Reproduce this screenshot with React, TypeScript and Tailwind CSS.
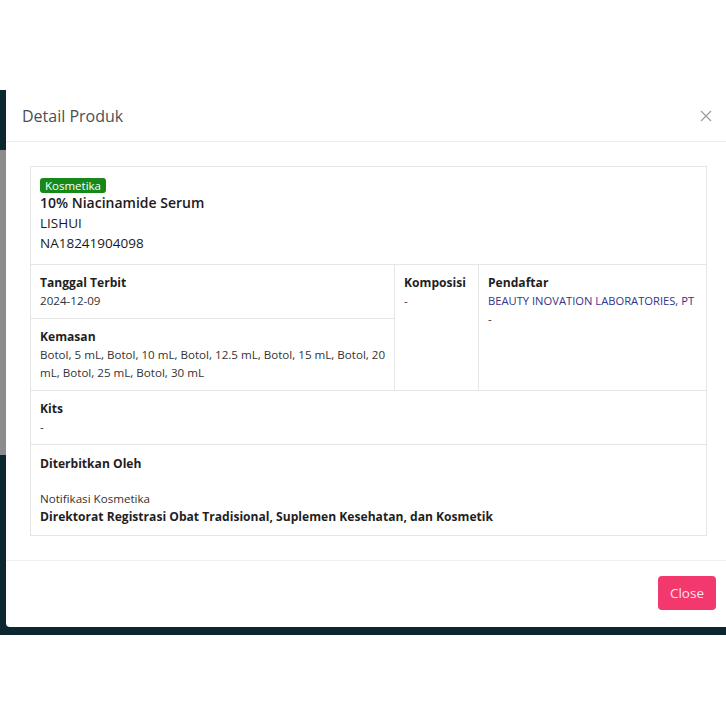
import React from 'react';

const font = { fontFamily: '"Open Sans", "Noto Sans", Arial, sans-serif' };

const Label: React.FC<{ children: React.ReactNode }> = ({ children }) => (
  <div className="text-[12.1px] font-bold leading-[18px] text-[#1f1f1f]">{children}</div>
);

const Value: React.FC<{ children: React.ReactNode; className?: string }> = ({ children, className }) => (
  <div className={`leading-[18px] ${className || 'text-[11.6px] text-[#333]'}`}>{children}</div>
);

const App: React.FC = () => {
  return (
    <div className="w-[726px] h-[726px] overflow-hidden bg-white" style={font}>
      <div className="h-[90px]" />
      {/* backdrop */}
      <div className="relative h-[545px] bg-[#0d2731]">
        <div className="absolute left-0 top-[60px] h-[305px] w-[6px] bg-[#8c8c8c]" />
        <div className="relative ml-[6px] flex h-[537px] w-[724px] flex-col rounded-br-[4px] rounded-bl-[4px] bg-white">
          {/* header */}
          <div className="flex h-[52px] items-center justify-between border-b border-[#ebedf0] pl-4 pr-[16px]">
            <h5 className="text-[16px] font-medium text-[#4a4f57]">Detail Produk</h5>
            <button className="mr-[2px] text-[#9aa0a6]">
              <svg width="12" height="12" viewBox="0 0 12 12" fill="none" stroke="currentColor" strokeWidth="1.3">
                <path d="M1 1l10 10M11 1L1 11" />
              </svg>
            </button>
          </div>
          {/* body */}
          <div className="px-6 pt-6 pb-6">
            <div className="w-[677px] border border-[#e6e6e6]">
              <div className="border-b border-[#e6e6e6] px-[9px] pt-[11px] pb-[11px]">
                <div className="flex">
                  <span className="rounded-[3px] bg-[#16891a] px-[5px] text-[11.5px] leading-[15px] text-white">Kosmetika</span>
                </div>
                <div className="text-[14px] font-semibold leading-[20px] text-[#1a1a1a]">10% Niacinamide Serum</div>
                <div className="text-[13.5px] leading-[20px] text-[#1a1a1a]">LISHUI</div>
                <div className="text-[13.5px] leading-[20px] text-[#1a1a1a]">NA18241904098</div>
              </div>
              <div className="flex border-b border-[#e6e6e6]">
                <div className="w-[364px] shrink-0 border-r border-[#e6e6e6]">
                  <div className="h-[54px] border-b border-[#e6e6e6] px-[9px] pt-[9px]">
                    <Label>Tanggal Terbit</Label>
                    <Value>2024-12-09</Value>
                  </div>
                  <div className="h-[71px] pl-[9px] pr-[2px] pt-[9px]">
                    <Label>Kemasan</Label>
                    <Value>Botol, 5 mL, Botol, 10 mL, Botol, 12.5 mL, Botol, 15 mL, Botol, 20 mL, Botol, 25 mL, Botol, 30 mL</Value>
                  </div>
                </div>
                <div className="w-[84px] shrink-0 border-r border-[#e6e6e6] px-[9px] pt-[9px]">
                  <Label>Komposisi</Label>
                  <Value>-</Value>
                </div>
                <div className="min-w-0 flex-1 px-[9px] pt-[9px]">
                  <Label>Pendaftar</Label>
                  <Value className="whitespace-nowrap text-[11.2px] text-[#34348a]">BEAUTY INOVATION LABORATORIES, PT</Value>
                  <Value>-</Value>
                </div>
              </div>
              <div className="h-[54px] border-b border-[#e6e6e6] px-[9px] pt-[9px]">
                <Label>Kits</Label>
                <Value>-</Value>
              </div>
              <div className="h-[90px] px-[9px] pt-[10px]">
                <Label>Diterbitkan Oleh</Label>
                <div className="h-[17px]" />
                <Value>Notifikasi Kosmetika</Value>
                <Label>Direktorat Registrasi Obat Tradisional, Suplemen Kesehatan, dan Kosmetik</Label>
              </div>
            </div>
          </div>
          {/* footer */}
          <div className="flex flex-1 items-start justify-end border-t border-[#eef0f2] pt-[15px] pr-[14px]">
            <button className="h-[34px] rounded-[4px] bg-[#f2386c] px-[12px] text-[13.5px] text-[#fde3ea]">Close</button>
          </div>
        </div>
      </div>
    </div>
  );
};

export default App;
